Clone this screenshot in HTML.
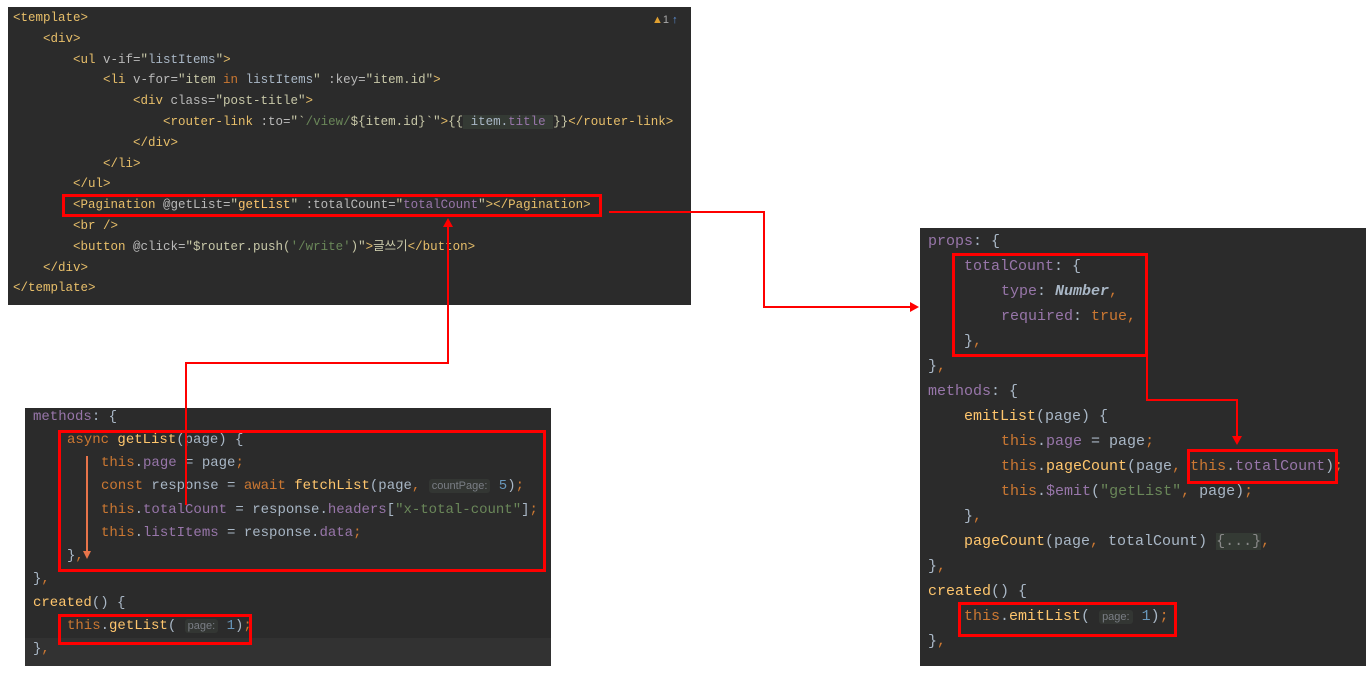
<!DOCTYPE html>
<html><head><meta charset="utf-8"><style>
html,body{margin:0;padding:0;background:#fff;width:1372px;height:676px;overflow:hidden;position:relative}
.p{position:absolute;background:#2b2b2b}
.l{position:absolute;white-space:pre;font-family:"Liberation Mono","Noto Sans CJK KR",monospace;color:#a9b7c6}
.a .l{font-size:12.5px;line-height:15px;margin-top:1px}
.b .l{font-size:14px;line-height:17px}
.c .l{font-size:15px;line-height:18px}
.t{color:#e8bf6a}.at{color:#bababa}.s{color:#c8c8a8}.v{color:#a9b7c6}
.k{color:#cc7832}.pu{color:#9876aa}.f{color:#ffc66d}.g{color:#6a8759}.n{color:#6897bb}
.h{font-family:"Liberation Sans",sans-serif;font-size:11px;color:#7a7e85;background:#333633;padding:1px 3px;border-radius:3px}
.r{position:absolute;border:3px solid #f00;box-sizing:border-box}
.ln{position:absolute;background:#f00}
</style></head><body>

<div class="p a" style="left:8px;top:7px;width:683px;height:298px">
<div class="l" style="left:5px;top:3px"><span class="t">&lt;template&gt;</span></div>
<div class="l" style="left:35px;top:24px"><span class="t">&lt;div&gt;</span></div>
<div class="l" style="left:65px;top:45px"><span class="t">&lt;ul </span><span class="at">v-if=</span><span class="s">"</span><span class="v">listItems</span><span class="s">"</span><span class="t">&gt;</span></div>
<div class="l" style="left:95px;top:65px"><span class="t">&lt;li </span><span class="at">v-for=</span><span class="s">"item </span><span class="k">in</span><span class="v"> listItems</span><span class="s">"</span> <span class="at">:key=</span><span class="s">"item.id"</span><span class="t">&gt;</span></div>
<div class="l" style="left:125px;top:86px"><span class="t">&lt;div </span><span class="at">class=</span><span class="s">"post-title"</span><span class="t">&gt;</span></div>
<div class="l" style="left:155px;top:107px"><span class="t">&lt;router-link </span><span class="at">:to=</span><span class="s">"`</span><span class="g">/view/</span><span class="s">${item.id}`"</span><span class="t">&gt;</span><span class="s">{{</span><span style="background:#343a34"> item.<span class="pu">title</span> </span><span class="s">}}</span><span class="t">&lt;/router-link&gt;</span></div>
<div class="l" style="left:125px;top:128px"><span class="t">&lt;/div&gt;</span></div>
<div class="l" style="left:95px;top:149px"><span class="t">&lt;/li&gt;</span></div>
<div class="l" style="left:65px;top:169px"><span class="t">&lt;/ul&gt;</span></div>
<div class="l" style="left:65px;top:190px"><span class="t">&lt;Pagination </span><span class="at">@getList=</span><span class="s">"</span><span class="f">getList</span><span class="s">"</span> <span class="at">:totalCount=</span><span class="s">"</span><span class="pu">totalCount</span><span class="s">"</span><span class="t">&gt;&lt;/Pagination&gt;</span></div>
<div class="l" style="left:65px;top:211px"><span class="t">&lt;br /&gt;</span></div>
<div class="l" style="left:65px;top:232px"><span class="t">&lt;button </span><span class="at">@click=</span><span class="s">"$router.push(</span><span class="g">'/write'</span><span class="s">)"</span><span class="t">&gt;</span><span class="s">글쓰기</span><span class="t">&lt;/button&gt;</span></div>
<div class="l" style="left:35px;top:253px"><span class="t">&lt;/div&gt;</span></div>
<div class="l" style="left:5px;top:273px"><span class="t">&lt;/template&gt;</span></div>
<div class="l" style="left:644px;top:5px;font-family:'Liberation Sans',sans-serif;font-size:11px;color:#aaa"><span style="color:#e0a030">▲</span>1 <span style="color:#5c8fd6">↑</span></div>
</div>

<div class="p b" style="left:25px;top:408px;width:526px;height:258px">
<div style="position:absolute;left:0;top:230px;width:526px;height:28px;background:#323232"></div>
<div class="l" style="left:8px;top:1px"><span class="pu">methods</span>: {</div>
<div class="l" style="left:42px;top:24px"><span class="k">async </span><span class="f">getList</span>(page) {</div>
<div class="l" style="left:76px;top:47px"><span class="k">this</span>.<span class="pu">page</span> = page<span class="k">;</span></div>
<div class="l" style="left:76px;top:70px"><span class="k">const </span>response = <span class="k">await </span><span class="f">fetchList</span>(page<span class="k">,</span> <span class="h">countPage:</span> <span class="n">5</span>)<span class="k">;</span></div>
<div class="l" style="left:76px;top:94px"><span class="k">this</span>.<span class="pu">totalCount</span> = response.<span class="pu">headers</span>[<span class="g">"x-total-count"</span>]<span class="k">;</span></div>
<div class="l" style="left:76px;top:117px"><span class="k">this</span>.<span class="pu">listItems</span> = response.<span class="pu">data</span><span class="k">;</span></div>
<div class="l" style="left:42px;top:140px">}<span class="k">,</span></div>
<div class="l" style="left:8px;top:163px">}<span class="k">,</span></div>
<div class="l" style="left:8px;top:187px"><span class="f">created</span>() {</div>
<div class="l" style="left:42px;top:210px"><span class="k">this</span>.<span class="f">getList</span>( <span class="h">page:</span> <span class="n">1</span>)<span class="k">;</span></div>
<div class="l" style="left:8px;top:233px">}<span class="k">,</span></div>
<div style="position:absolute;left:61px;top:48px;width:2px;height:100px;background:#e8744a"></div>
<div style="position:absolute;left:58px;top:143px;width:0;height:0;border-left:4px solid transparent;border-right:4px solid transparent;border-top:8px solid #e8744a"></div>
</div>

<div class="p c" style="left:920px;top:228px;width:446px;height:438px">
<div class="l" style="left:8px;top:5px"><span class="pu">props</span>: {</div>
<div class="l" style="left:44px;top:30px"><span class="pu">totalCount</span>: {</div>
<div class="l" style="left:81px;top:55px"><span class="pu">type</span>: <i style="color:#a9b7c6;font-weight:bold">Number</i><span class="k">,</span></div>
<div class="l" style="left:81px;top:80px"><span class="pu">required</span>: <span class="k">true,</span></div>
<div class="l" style="left:44px;top:105px">}<span class="k">,</span></div>
<div class="l" style="left:8px;top:130px">}<span class="k">,</span></div>
<div class="l" style="left:8px;top:155px"><span class="pu">methods</span>: {</div>
<div class="l" style="left:44px;top:180px"><span class="f">emitList</span>(page) {</div>
<div class="l" style="left:81px;top:205px"><span class="k">this</span>.<span class="pu">page</span> = page<span class="k">;</span></div>
<div class="l" style="left:81px;top:230px"><span class="k">this</span>.<span class="f">pageCount</span>(page<span class="k">,</span> <span class="k">this</span>.<span class="pu">totalCount</span>)<span class="k">;</span></div>
<div class="l" style="left:81px;top:255px"><span class="k">this</span>.<span class="pu">$emit</span>(<span class="g">"getList"</span><span class="k">,</span> page)<span class="k">;</span></div>
<div class="l" style="left:44px;top:280px">}<span class="k">,</span></div>
<div class="l" style="left:44px;top:305px"><span class="f">pageCount</span>(page<span class="k">,</span> totalCount) <span style="background:#343a34;color:#888">{...}</span><span class="k">,</span></div>
<div class="l" style="left:8px;top:330px">}<span class="k">,</span></div>
<div class="l" style="left:8px;top:355px"><span class="f">created</span>() {</div>
<div class="l" style="left:44px;top:380px"><span class="k">this</span>.<span class="f">emitList</span>( <span class="h">page:</span> <span class="n">1</span>)<span class="k">;</span></div>
<div class="l" style="left:8px;top:405px">}<span class="k">,</span></div>
</div>

<div class="r" style="left:62px;top:194px;width:540px;height:23px"></div>
<div class="r" style="left:58px;top:430px;width:488px;height:142px"></div>
<div class="r" style="left:58px;top:614px;width:194px;height:31px"></div>
<div class="r" style="left:952px;top:253px;width:196px;height:104px"></div>
<div class="r" style="left:1187px;top:449px;width:151px;height:35px"></div>
<div class="r" style="left:958px;top:602px;width:219px;height:35px"></div>

<div class="ln" style="left:609px;top:211px;width:156px;height:2px"></div>
<div class="ln" style="left:763px;top:211px;width:2px;height:97px"></div>
<div class="ln" style="left:763px;top:306px;width:148px;height:2px"></div>
<div style="position:absolute;left:910px;top:302px;border-top:5px solid transparent;border-bottom:5px solid transparent;border-left:9px solid #f00"></div>

<div class="ln" style="left:447px;top:226px;width:2px;height:138px"></div>
<div style="position:absolute;left:443px;top:218px;border-left:5px solid transparent;border-right:5px solid transparent;border-bottom:9px solid #f00"></div>
<div class="ln" style="left:185px;top:362px;width:264px;height:2px"></div>
<div class="ln" style="left:185px;top:362px;width:2px;height:143px"></div>

<div class="ln" style="left:1146px;top:356px;width:2px;height:45px"></div>
<div class="ln" style="left:1146px;top:399px;width:92px;height:2px"></div>
<div class="ln" style="left:1236px;top:399px;width:2px;height:38px"></div>
<div style="position:absolute;left:1232px;top:436px;border-left:5px solid transparent;border-right:5px solid transparent;border-top:9px solid #f00"></div>
</body></html>
